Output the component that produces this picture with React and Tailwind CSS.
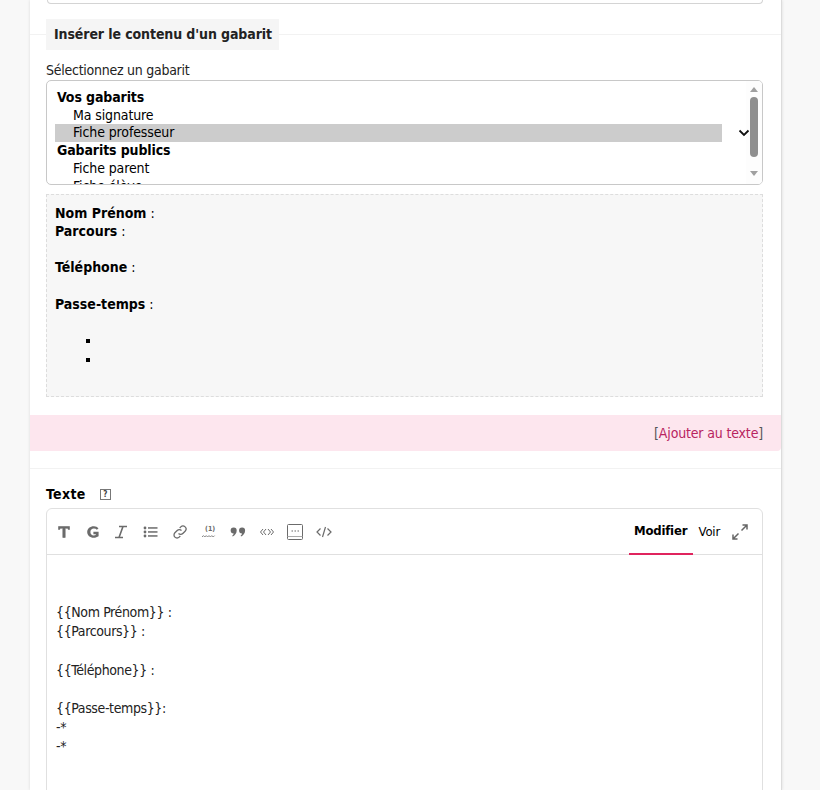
const font = { fontFamily: '"DejaVu Sans Condensed", "DejaVu Sans", sans-serif', fontStretch: "condensed" };

function ToolIcons() {
  const c = "#6b6b6b";
  return (
    <div className="flex items-center text-[#666]">
      <svg width="14" height="16" viewBox="0 0 14 16" className="ml-[10px]"><path d="M1.500 2.500h11v3h-1.200l-.6-1.200H8.200v9.200H5.800V4.300H3.300l-.6 1.200H1.500z" fill={c} stroke={c} strokeWidth=".6" /></svg>
      <svg width="16" height="16" viewBox="0 0 16 16" className="ml-[14px]"><path d="M13.500 4.200A6 6 0 0 0 8.800 2.200C5 2.200 2.200 4.600 2.200 8S5 13.800 8.600 13.800c2 0 3.600-.6 5-1.500V7.800H8.400v2.400h2.400v.9c-.6.3-1.200.4-2 .4-2 0-3.400-1.400-3.400-3.500s1.400-3.500 3.500-3.500c1.200 0 2.200.4 3 1.200z" fill={c} /></svg>
      <svg width="14" height="16" viewBox="0 0 14 16" className="ml-[13px]"><path d="M5 2.500h8M1 13.500h8M9 2.500l-4 11" fill="none" stroke={c} strokeWidth="1.600" /></svg>
      <svg width="15" height="14" viewBox="0 0 15 14" className="ml-[15px]"><g fill={c}><circle cx="2" cy="3" r="1.400" /><circle cx="2" cy="7" r="1.400" /><circle cx="2" cy="11" r="1.400" /><rect x="5" y="2.200" width="9.500" height="1.500" /><rect x="5" y="6.200" width="9.500" height="1.500" /><rect x="5" y="10.200" width="9.500" height="1.500" /></g></svg>
      <svg width="16" height="16" viewBox="0 0 16 16" className="ml-[14px]"><path d="M6.500 9.500a3 3 0 0 0 4.300 0l2.300-2.300a3 3 0 0 0-4.300-4.300L7.700 4M9.500 6.500a3 3 0 0 0-4.300 0L2.900 8.800a3 3 0 0 0 4.300 4.300L8.300 12" fill="none" stroke={c} strokeWidth="1.300" /></svg>
      <svg width="16" height="16" viewBox="0 0 16 16" className="ml-[13px]"><text x="4" y="7" fontSize="7" fontWeight="700" fill={c}>(1)</text><path d="M1 13l1.400-1.400L3.800 13l1.400-1.400L6.600 13 8 11.600 9.400 13l1.400-1.400 1.400 1.400 1.400-1.400" fill="none" stroke={c} strokeWidth=".8" /></svg>
      <svg width="16" height="12" viewBox="0 0 16 12" className="ml-[13px]"><path d="M3.600 1.500a3 3 0 0 1 3.100 3c0 2.600-1.700 5-4 6l-.5-.7c.8-.7 1.300-1.400 1.500-2.300A3 3 0 0 1 3.600 1.500zM12 1.500a3 3 0 0 1 3.100 3c0 2.600-1.700 5-4 6l-.5-.7c.8-.7 1.300-1.400 1.500-2.300A3 3 0 0 1 12 1.500z" fill={c} /></svg>
      <svg width="16" height="10" viewBox="0 0 16 10" className="ml-[13px]"><path d="M4 2L1.500 5 4 8M7 2L4.500 5 7 8M9 2l2.500 3L9 8M12 2l2.500 3L12 8" fill="none" stroke={c} strokeWidth="1" /></svg>
      <svg width="16" height="16" viewBox="0 0 16 16" className="ml-[12px]"><rect x=".5" y=".5" width="15" height="15" rx="1" fill="none" stroke={c} /><path d="M.5 12.500h15" stroke="#aaa" /><path d="M4.500 7h1.500M7.500 7h1.500M10.500 7h1.500" stroke={c} /></svg>
      <svg width="16" height="12" viewBox="0 0 16 12" className="ml-[13px]"><path d="M4.500 2.500L1 6l3.500 3.500M11.500 2.500L15 6l-3.500 3.500M9.500 1l-3 10" fill="none" stroke={c} strokeWidth="1.200" /></svg>
    </div>
  );
}

export default function App() {
  return (
    <div className="h-[790px] overflow-hidden bg-[#f8f8f8] text-[14px] leading-[18px] text-[#222]" style={font}>
      <div className="ml-[30px] w-[752px] h-full bg-white border-r border-[#dcdcdc] shadow-[0_0_3px_rgba(0,0,0,0.12)]">
        <div className="mx-[17px] w-[716px] h-[4px] border-x border-b border-[#d4d4d4] rounded-b-[4px]" />
        <div className="relative mt-[15px] h-[31px]">
          <div className="absolute left-0 right-0 top-[15px] h-[1px] bg-[#f2f2f2]" />
          <h3 className="relative ml-[16px] inline-block w-[233px] h-[31px] bg-[#f5f5f5] pl-[8px] text-[14px] leading-[31px] font-bold tracking-[-0.1px] text-[#222]">Insérer le contenu d'un gabarit</h3>
        </div>
        <label className="block mt-[11px] ml-[16px] leading-[18px] tracking-[-0.26px]">Sélectionnez un gabarit</label>
        <div className="mt-[1px] ml-[16px] w-[717px] h-[105px] border border-[#c8c8c8] rounded-[5px] bg-white flex overflow-hidden relative">
          <div className="flex-1 pl-[8px] pt-[8px] pr-[24px] leading-[17.700px] text-black tracking-[-0.12px]">
            <div className="font-bold pl-[2px]">Vos gabarits</div>
            <div className="pl-[18px]">Ma signature</div>
            <div className="pl-[18px] bg-[#cccccc]">Fiche professeur</div>
            <div className="font-bold pl-[2px]">Gabarits publics</div>
            <div className="pl-[18px]">Fiche parent</div>
            <div className="pl-[18px]">Fiche élève</div>
          </div>
          <svg width="12" height="8" viewBox="0 0 12 8" className="absolute left-[691px] top-[48px]"><path d="M1.500 1.500L6 6l4.500-4.500" fill="none" stroke="#111" strokeWidth="1.800" /></svg>
          <div className="w-[16px] shrink-0 flex flex-col items-center bg-[#fdfdfd] pt-[6px]">
            <div className="w-0 h-0 border-x-[4.500px] border-x-transparent border-b-[5px] border-b-[#a0a0a0]" />
            <div className="mt-[5px] w-[8px] h-[60px] rounded-[4px] bg-[#8f8f8f]" />
            <div className="mt-[14px] w-0 h-0 border-x-[4.500px] border-x-transparent border-t-[5px] border-t-[#a0a0a0]" />
          </div>
        </div>
        <div className="mt-[9px] ml-[16px] w-[717px] h-[203px] border border-dashed border-[#ddd] bg-[#f7f7f7] pl-[8px] pt-[9px] leading-[18.200px] text-black">
          <p><b>Nom Prénom</b> :</p>
          <p><b>Parcours</b> :</p>
          <p className="mt-[18px]"><b>Téléphone</b> :</p>
          <p className="mt-[18px]"><b>Passe-temps</b> :</p>
          <ul className="mt-[18px] ml-[46px] list-[square] pl-[0px]">
            <li className="h-[19px]" />
            <li className="h-[19px]" />
          </ul>
        </div>
        <div className="mt-[18px] h-[36px] bg-[#fde6ee] rounded-br-[4px] flex items-center justify-end pr-[18px] text-[#555] tracking-[-0.16px]">
          <span>[<a className="text-[#b8245f]">Ajouter au texte</a>]</span>
        </div>
        <div className="mt-[17px] h-[1px] bg-[#f2f2f2]" />
        <div className="mt-[16px] ml-[16px] flex items-center h-[18px]">
          <span className="font-bold text-black tracking-[0.35px]">Texte</span>
          <span className="ml-[14px] w-[11px] h-[11px] border border-[#777] text-[8px] leading-[9px] text-center text-[#444] font-bold">?</span>
        </div>
        <div className="mt-[5px] ml-[16px] w-[717px] h-[400px] border border-[#e0e0e0] rounded-t-[6px]">
          <div className="h-[46px] border-b border-[#e0e0e0] flex items-center justify-between">
            <ToolIcons />
            <div className="flex items-center h-full">
              <span className="h-full w-[64px] flex items-center justify-center font-bold text-black text-[13px] tracking-[-0.2px] border-b-2 border-[#e0245e] box-border -mb-[1px]">Modifier</span>
              <span className="ml-[6px] text-black text-[13px] tracking-[-0.2px]">Voir</span>
              <svg width="16" height="16" viewBox="0 0 16 16" className="ml-[12px] mr-[14px]"><path d="M9.500 6.500L14.500 1.500M10.500 1h4.500v4.500M6.500 9.500l-5 5M1 10.500V15h4.500" fill="none" stroke="#666" strokeWidth="1.500" /></svg>
            </div>
          </div>
          <pre className="pl-[9px] pt-[48px] text-[14px] leading-[19.200px] tracking-[-0.38px] text-[#222]" style={font}>{`{{Nom Prénom}} :
{{Parcours}} :

{{Téléphone}} :

{{Passe-temps}}:
-*
-*`}</pre>
        </div>
      </div>
    </div>
  );
}
